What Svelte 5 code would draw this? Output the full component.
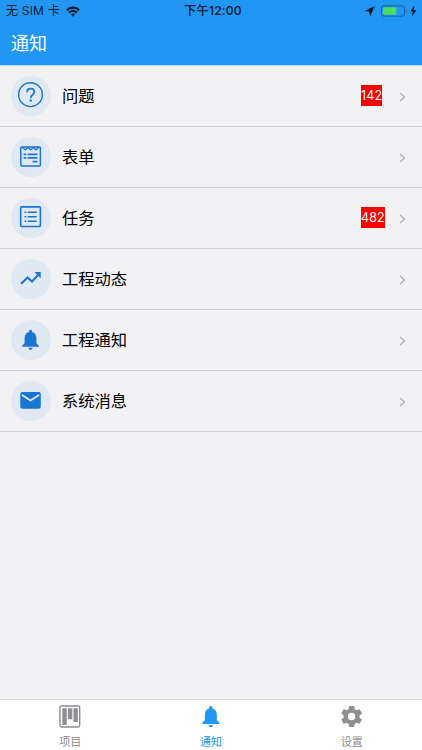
<script lang="ts">
  type Item = { icon: string; title: string; count?: number };

  const items: Item[] = [
    { icon: 'help', title: '问题', count: 142 },
    { icon: 'form', title: '表单' },
    { icon: 'task', title: '任务', count: 482 },
    { icon: 'trend', title: '工程动态' },
    { icon: 'bell', title: '工程通知' },
    { icon: 'mail', title: '系统消息' }
  ];

  const tabs = [
    { id: 'project', label: '项目' },
    { id: 'notice', label: '通知' },
    { id: 'setting', label: '设置' }
  ];

  let active = $state('notice');
</script>

<div class="page">
  <header>
    <div class="status">
      <div class="carrier">
        <span>无 SIM 卡</span>
        <svg width="14" height="11" viewBox="0 0 14 11">
          <path d="M7 10.7 4.9 8.5a3 3 0 0 1 4.2 0z" fill="#06182b" />
          <path d="M3.1 6.6a5.6 5.6 0 0 1 7.8 0M.8 4.1a8.9 8.9 0 0 1 12.4 0" fill="none" stroke="#06182b" stroke-width="2.2" />
        </svg>
      </div>
      <div class="time">下午12:00</div>
      <div class="power">
        <svg width="54" height="14" viewBox="0 0 54 14">
          <path d="M10.8 2 6.2 12.2 5.2 7.8.6 6.9z" fill="#06182b" />
          <rect x="17.5" y="1.8" width="23" height="10.4" rx="2.6" fill="none" stroke="#14609f" />
          <rect x="19" y="3.3" width="13.3" height="7.4" rx="1" fill="#4cd964" />
          <path d="M42 5.2q1.4 1.8 0 3.6z" fill="#14609f" />
          <path d="M50.3 1.8 46.3 7.6h2.5l-.9 4.9 4.4-6.2h-2.6z" fill="#06182b" />
        </svg>
      </div>
    </div>
    <h1>通知</h1>
  </header>

  <main>
    {#each items as item}
      <div class="row">
        <div class="avatar">
          <svg width="40" height="40" viewBox="0 0 40 40">
            {#if item.icon === 'help'}
              <g fill="none" stroke="#1976d2" stroke-width="1.4">
                <circle cx="19.5" cy="18.7" r="11.9" />
                <path d="M16 16.3c0-2.3 1.5-3.6 3.6-3.6 2.2 0 3.7 1.4 3.7 3.3 0 2.8-3.6 3-3.6 5.8v.5" stroke-width="1.7" />
              </g>
              <circle cx="19.7" cy="24.6" r="1.2" fill="#1976d2" />
            {:else if item.icon === 'form'}
              <g fill="none" stroke="#1976d2" stroke-width="1.5">
                <rect x="9.8" y="9.9" width="19.6" height="19.2" rx="1" />
                <path d="m11.5 10.5 2.7 2.3 2.7-2.3 2.7 2.3 2.7-2.3 2.7 2.3 2.7-2.3" stroke-width="1.3" />
                <path d="M12.6 17.3h2.8m1.2 0h9.8M12.6 20.9h2.8m1.2 0h9.8M21.6 24.6h4.8" stroke-width="1.7" />
              </g>
            {:else if item.icon === 'task'}
              <g fill="none" stroke="#1976d2" stroke-width="1.6">
                <rect x="9.7" y="8.9" width="19.7" height="19.6" rx="1" />
                <path d="M13.5 14.3h1.8m1.4 0h9M13.5 18.7h1.8m1.4 0h9M13.5 23.2h1.8m1.4 0h9" />
              </g>
            {:else if item.icon === 'trend'}
              <path d="m10.1 24.7 6.5-6.3 4.4 4.1 7.2-7.4" fill="none" stroke="#1976d2" stroke-width="2.1" />
              <path d="M23.4 13h6.3v6.2z" fill="#1976d2" />
            {:else if item.icon === 'bell'}
              <path d="M19.5 9.7c.9 0 1.5.6 1.5 1.5v.7c2.9.7 4.4 3 4.4 6v5.3l2.5 2.5v1H11.1v-1l2.5-2.5v-5.3c0-3 1.5-5.3 4.4-6v-.7c0-.9.6-1.5 1.5-1.5zM17.4 27.8h4.2a2.1 2.1 0 0 1-4.2 0z" fill="#1976d2" />
            {:else}
              <rect x="9.3" y="11.1" width="20.5" height="16.6" rx="2" fill="#1976d2" />
              <path d="m11 14.1 8.5 5.4 8.6-5.4" fill="none" stroke="#dfe8f3" stroke-width="1.8" />
            {/if}
          </svg>
        </div>
        <div class="title">{item.title}</div>
        <div class="extra">
          {#if item.count}
            <span class="badge">{item.count}</span>
          {/if}
        </div>
        <svg class="arrow" width="7" height="10" viewBox="0 0 7 10">
          <path d="m1 .9 4.5 4.1L1 9.1" fill="none" stroke="#b0b0b4" stroke-width="1.4" />
        </svg>
      </div>
    {/each}
  </main>

  <nav>
    {#each tabs as tab}
      <button class:active={active === tab.id} onclick={() => (active = tab.id)}>
        <svg width="24" height="24" viewBox="0 0 24 24" fill="currentColor">
          {#if tab.id === 'project'}
            <rect x="1.5" y="1.1" width="20.6" height="21.8" rx="1.5" fill="none" stroke="currentColor" stroke-width="1.5" />
            <path d="M4 3.5h4.6v17.3H4zM9.8 3.5h4.6v11.3H9.8zM15.6 3.5h4.6v14.2h-4.6z" />
          {:else if tab.id === 'notice'}
            <path d="M11.7 1c1 0 1.7.7 1.7 1.7v.6c3 .8 4.7 3.4 4.7 6.6v6l2.7 2.6v1.3H2.9v-1.3l2.7-2.6v-6c0-3.2 1.7-5.8 4.5-6.6v-.6c0-1 .7-1.7 1.6-1.7zM9.2 21h5a2.5 2.2 0 0 1-5 0z" />
          {:else}
            <path transform="translate(-1.6 -1.2) scale(1.1)" d="M19.43 12.98c.04-.32.07-.64.07-.98s-.03-.66-.07-.98l2.11-1.65c.19-.15.24-.42.12-.64l-2-3.46c-.12-.22-.39-.3-.61-.22l-2.49 1c-.52-.4-1.08-.73-1.69-.98l-.38-2.65A.49.49 0 0 0 14 2h-4c-.25 0-.46.18-.49.42l-.38 2.65c-.61.25-1.17.59-1.69.98l-2.49-1c-.23-.09-.49 0-.61.22l-2 3.46c-.13.22-.07.49.12.64l2.11 1.65c-.04.32-.07.65-.07.98s.03.66.07.98l-2.11 1.65c-.19.15-.24.42-.12.64l2 3.46c.12.22.39.3.61.22l2.49-1c.52.4 1.08.73 1.69.98l.38 2.65c.03.24.24.42.49.42h4c.25 0 .46-.18.49-.42l.38-2.65c.61-.25 1.17-.59 1.69-.98l2.49 1c.23.09.49 0 .61-.22l2-3.46c.12-.22.07-.49-.12-.64zM12 15.5a3.5 3.5 0 1 1 0-7 3.5 3.5 0 0 1 0 7z" />
          {/if}
        </svg>
        <span>{tab.label}</span>
      </button>
    {/each}
  </nav>
</div>

<style>
  :global(body) {
    margin: 0;
  }

  .page {
    display: flex;
    flex-direction: column;
    height: 100vh;
    background: #f2f2f4;
    font-family: Inter, "Noto Sans CJK SC", sans-serif;
    color: #000;
  }

  header {
    box-sizing: border-box;
    height: 66px;
    background: #2196f3;
    border-bottom: 1px solid #b9def9;
  }

  .status {
    display: grid;
    grid-template-columns: 1fr auto 1fr;
    align-items: center;
    height: 22px;
    padding: 0 4px 0 6px;
    font-size: 12px;
    line-height: 22px;
    color: #06182b;
  }

  .carrier {
    display: flex;
    align-items: center;
    gap: 6px;
    letter-spacing: 0.2px;
  }

  .time {
    padding-left: 2px;
    font-size: 12.2px;
    font-weight: 500;
    letter-spacing: 0.2px;
  }

  .power {
    display: flex;
    justify-content: flex-end;
  }

  h1 {
    margin: 0;
    padding: 0 11px;
    font-size: 18px;
    font-weight: 400;
    line-height: 43px;
    color: #fff;
  }

  main {
    flex: 1;
  }

  .row {
    box-sizing: border-box;
    display: flex;
    align-items: center;
    height: 61px;
    padding: 0 16px 0 11px;
    border-bottom: 1px solid #cdcdd0;
  }

  .avatar {
    width: 40px;
    height: 40px;
    border-radius: 50%;
    background: #dfe8f3;
  }

  .avatar svg {
    display: block;
  }

  .title {
    flex: 1;
    margin-left: 11px;
    font-size: 16.3px;
    line-height: 24px;
  }

  .extra {
    display: flex;
    width: 38px;
  }

  .badge {
    margin-bottom: 1px;
    background: #f00;
    color: #fff;
    font-size: 12.4px;
    letter-spacing: 0.2px;
    line-height: 21px;
  }

  .arrow {
    margin-top: 1px;
  }

  nav {
    box-sizing: border-box;
    display: flex;
    height: 51px;
    background: #fff;
    border-top: 1px solid #d8d8dc;
  }

  button {
    flex: 1;
    display: flex;
    flex-direction: column;
    align-items: center;
    padding: 5px 0 0;
    border: none;
    background: none;
    color: #8e8e93;
    font-family: inherit;
    font-size: 11px;
    line-height: 16px;
    cursor: pointer;
  }

  button span {
    margin-top: 6px;
  }

  button.active {
    color: #2196f3;
  }
</style>
